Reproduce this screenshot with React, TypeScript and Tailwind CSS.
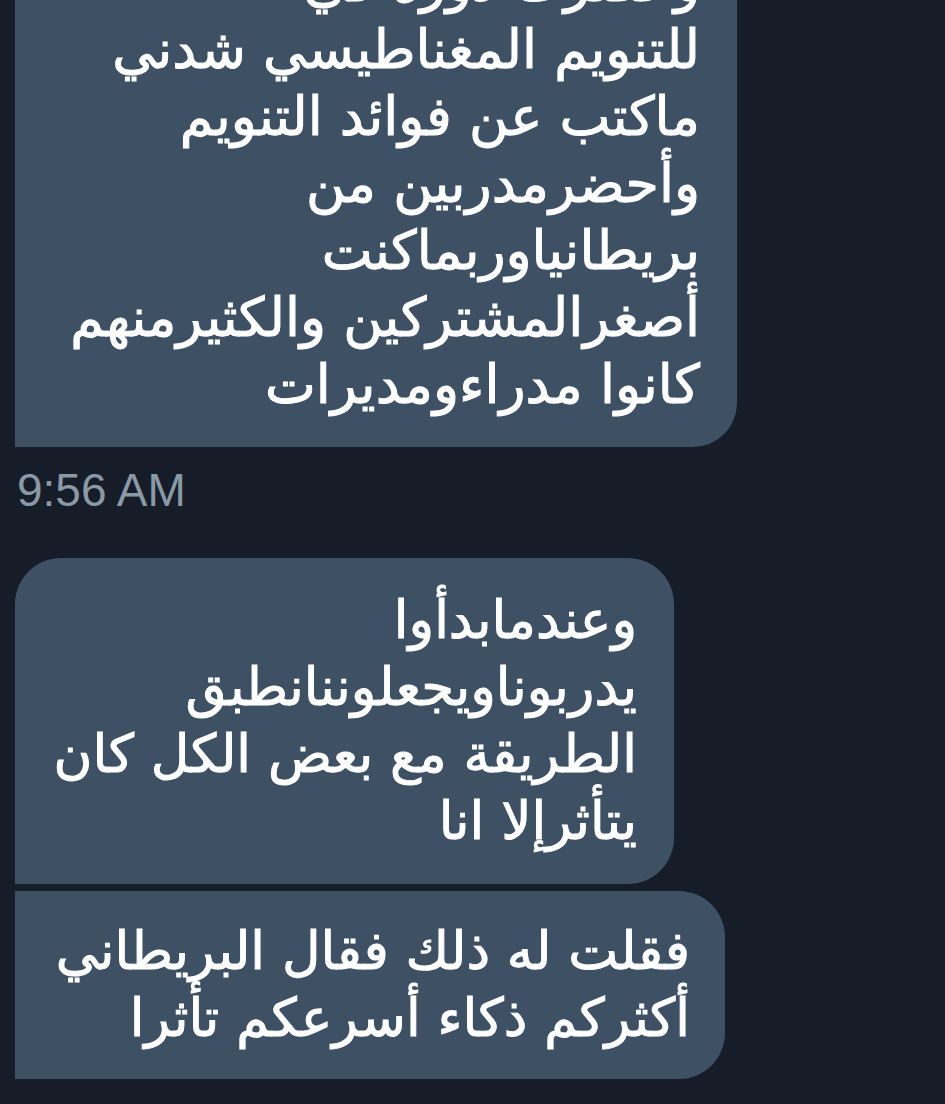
export default function App() {
  return (
    <div className="h-[1104px] w-[945px] overflow-hidden bg-[#161d29]">
      <div className="flex flex-col items-start pl-[15px]">
        {/* First message, cut off at the top */}
        <div
          dir="rtl"
          className="-mt-[71px] w-[722px] whitespace-nowrap rounded-tr-[44px] rounded-br-[44px] bg-[#3e5063] pt-5 pb-[29px] pr-[37px] text-[54px] leading-[67px] text-white [-webkit-text-stroke:1px_white] [font-family:'DejaVu_Sans','Noto_Sans',sans-serif]"
        >
          وحضرت دورة في
          <br />
          للتنويم المغناطيسي شدني
          <br />
          ماكتب عن فوائد التنويم
          <br />
          وأحضرمدربين من
          <br />
          بريطانياوربماكنت
          <br />
          أصغرالمشتركين والكثيرمنهم
          <br />
          كانوا مدراءومديرات
        </div>

        <p className="mt-[18px] pl-[2px] text-[46px] leading-[50px] text-[#8b98a5] [font-family:'Liberation_Sans',Arial,sans-serif]">
          9:56 AM
        </p>

        {/* Second message */}
        <div
          dir="rtl"
          className="mt-[43px] w-[659px] whitespace-nowrap rounded-tl-[46px] rounded-tr-[46px] rounded-br-[46px] bg-[#3e5063] pt-7 pb-[30px] pr-[37px] text-[53px] leading-[67px] text-white [-webkit-text-stroke:1px_white] [font-family:'DejaVu_Sans','Noto_Sans',sans-serif]"
        >
          وعندمابدأوا
          <br />
          يدربوناويجعلوننانطبق
          <br />
          الطريقة مع بعض الكل كان
          <br />
          يتأثرإلا انا
        </div>

        {/* Third message */}
        <div
          dir="rtl"
          className="mt-[7px] w-[710px] whitespace-nowrap rounded-tr-[46px] rounded-br-[46px] bg-[#3e5063] pt-[26px] pb-7 pr-[35px] text-[53px] leading-[67px] text-white [-webkit-text-stroke:1px_white] [font-family:'DejaVu_Sans','Noto_Sans',sans-serif]"
        >
          فقلت له ذلك فقال البريطاني
          <br />
          أكثركم ذكاء أسرعكم تأثرا
        </div>
      </div>
    </div>
  )
}
